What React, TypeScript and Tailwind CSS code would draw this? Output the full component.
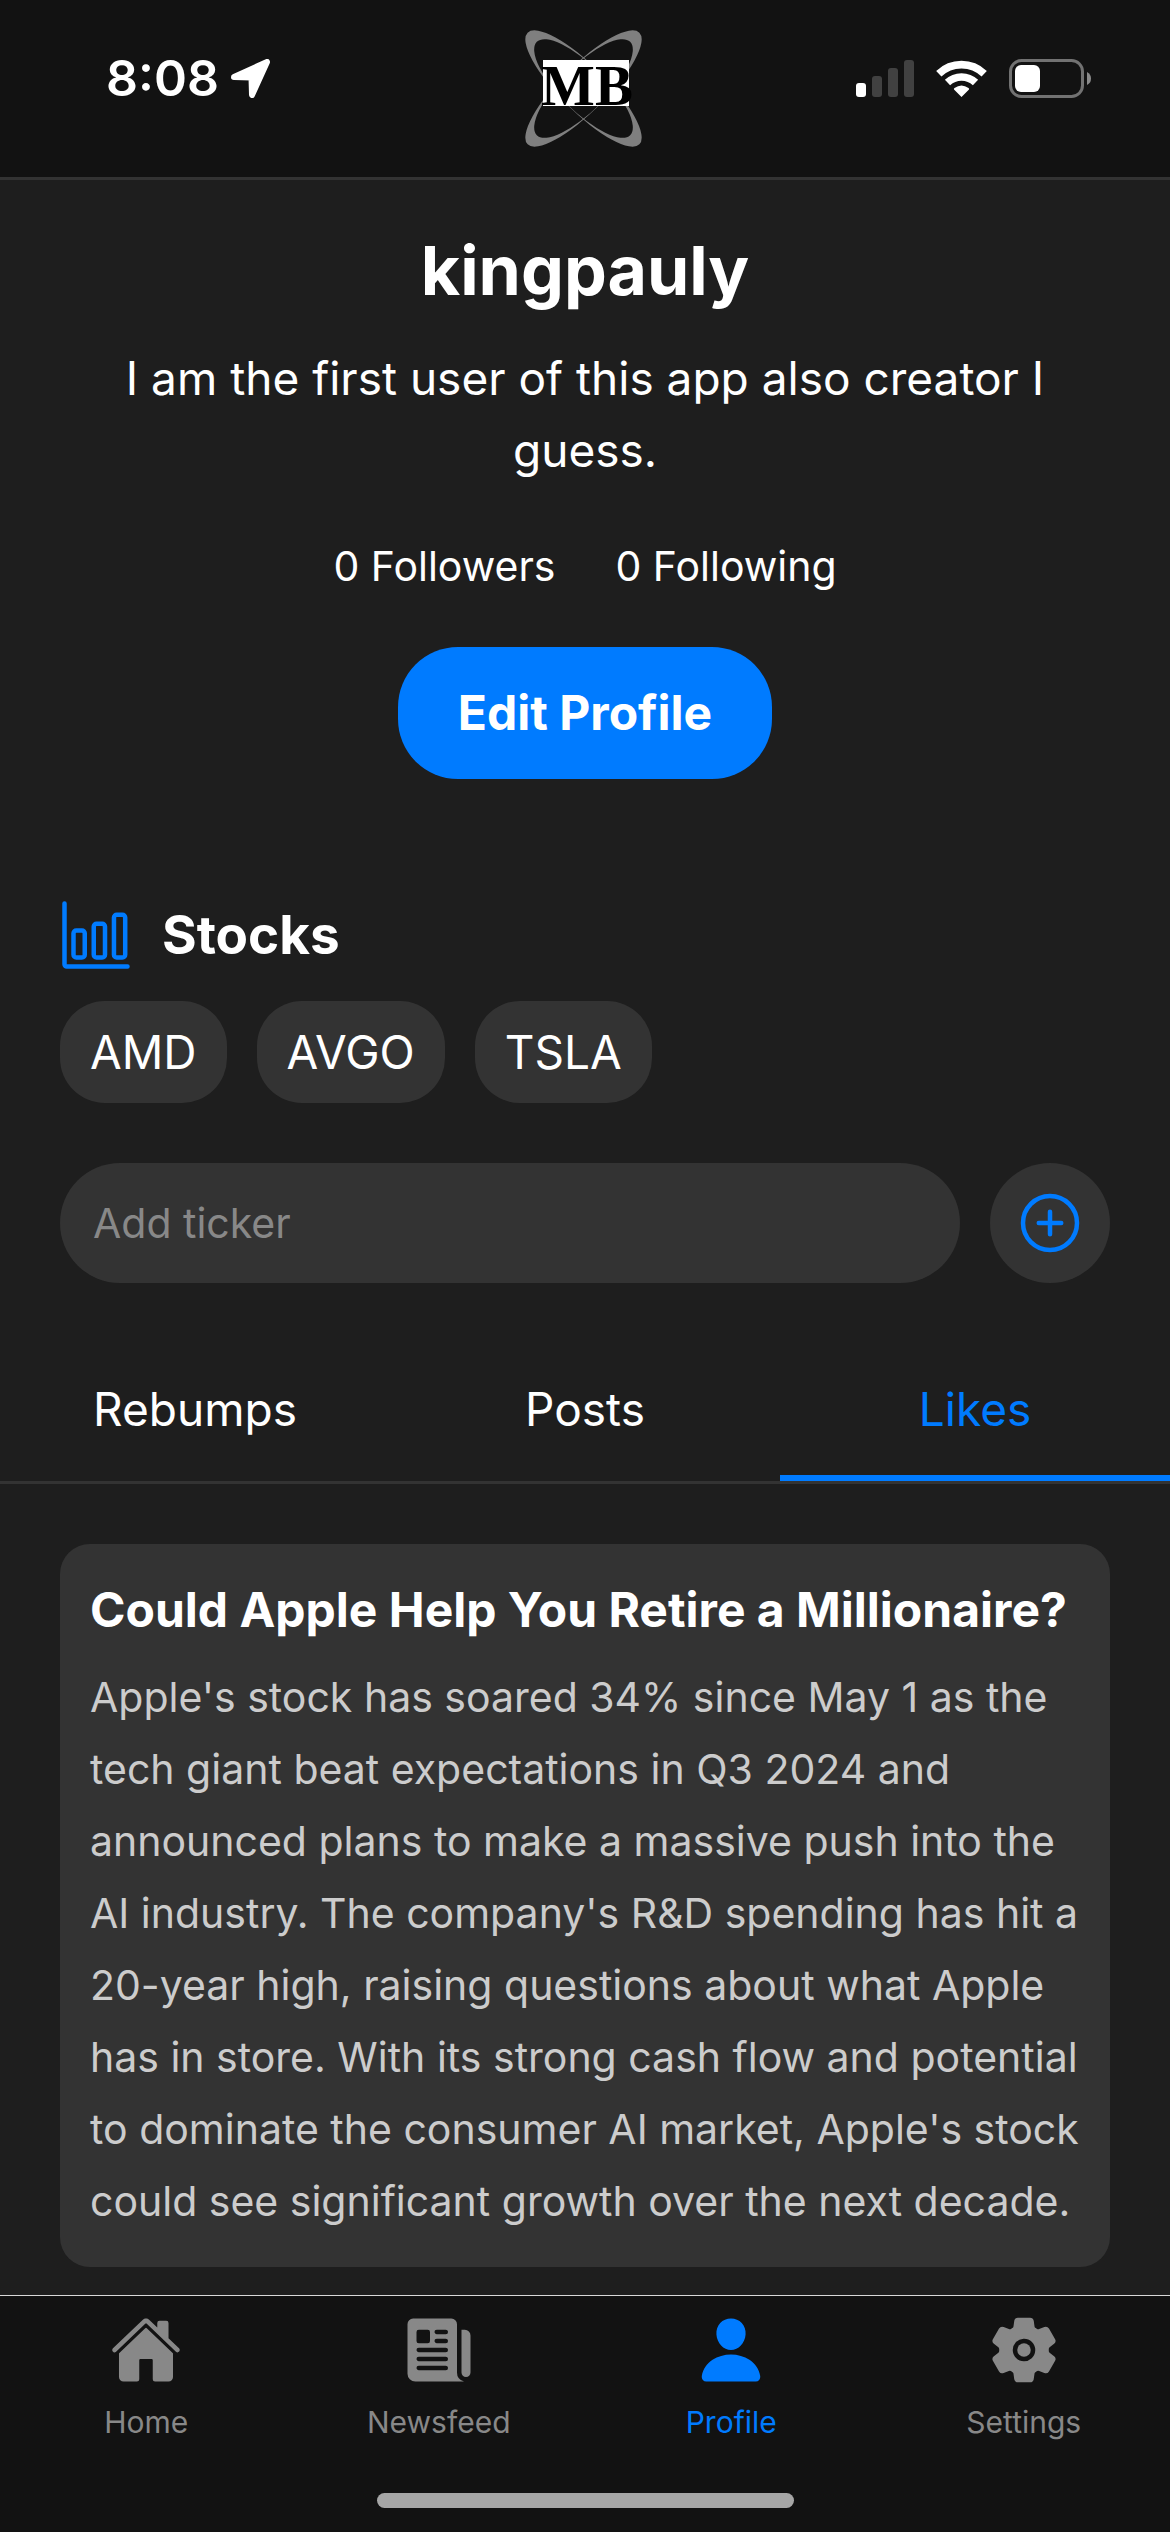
import { useState } from 'react';
import type { ComponentType } from 'react';
import {
  IoAddCircleOutline,
  IoBarChartOutline,
  IoHome,
  IoNewspaper,
  IoPerson,
  IoSettings,
} from 'react-icons/io5';

const tickers = ['AMD', 'AVGO', 'TSLA'];
const tabs = ['Rebumps', 'Posts', 'Likes'];

const navItems: { label: string; icon: ComponentType<{ className?: string }> }[] = [
  { label: 'Home', icon: IoHome },
  { label: 'Newsfeed', icon: IoNewspaper },
  { label: 'Profile', icon: IoPerson },
  { label: 'Settings', icon: IoSettings },
];

const RING =
  'M-79 0A79 23 0 1 1 79 0A79 23 0 1 1 -79 0ZM-66 0A66 22.6 0 1 0 66 0A66 22.6 0 1 0 -66 0Z';

function Logo() {
  return (
    <svg viewBox="24 20 117 117" className="size-[117px]" role="img" aria-label="MB">
      <g fill="#7f7f7f" fillRule="evenodd">
        <path d={RING} transform="translate(82.5 78.5) rotate(45)" />
        <path d={RING} transform="translate(82.5 78.5) rotate(-45)" />
      </g>
      <rect x="42" y="50" width="86" height="46" fill="#fff" />
      <text
        x="86"
        y="95"
        textAnchor="middle"
        fontFamily="'Liberation Serif', serif"
        fontWeight="700"
        fontSize="57"
        fill="#000"
      >
        MB
      </text>
    </svg>
  );
}

function LocationArrow() {
  return (
    <svg viewBox="0 0 39 39" className="size-[39px]" aria-hidden="true">
      <path
        d="M3 18L36 3L21 36L20.500 18.500Z"
        fill="#fff"
        stroke="#fff"
        strokeWidth="6"
        strokeLinejoin="round"
      />
    </svg>
  );
}

function Signal() {
  return (
    <svg viewBox="0 0 58 37" className="h-[37px] w-[58px]" aria-hidden="true">
      <rect x="0" y="23" width="10" height="14" rx="3" fill="#fff" />
      <rect x="16" y="16" width="10" height="21" rx="3" fill="#414141" />
      <rect x="32" y="8" width="10" height="29" rx="3" fill="#414141" />
      <rect x="48" y="0" width="10" height="37" rx="3" fill="#414141" />
    </svg>
  );
}

function Wifi() {
  return (
    <svg viewBox="0 0 51 37" className="h-[37px] w-[51px]" aria-hidden="true">
      <g fill="none" stroke="#fff" strokeWidth="7.600">
        <path d="M2.800 13.700A32.800 32.800 0 0 1 48.200 13.700" />
        <path d="M11.500 22.600A20.300 20.300 0 0 1 39.500 22.600" />
      </g>
      <path d="M25.500 37L18 29.500Q17.500 28.500 18.500 28Q25.500 23 32.500 28Q33.500 28.500 33 29.500Z" fill="#fff" />
    </svg>
  );
}

function Battery() {
  return (
    <svg viewBox="0 0 82 39" className="h-[39px] w-[82px]" aria-hidden="true">
      <rect x="1.500" y="1.500" width="72" height="36" rx="11" fill="none" stroke="#727272" strokeWidth="3" />
      <rect x="6" y="6" width="25" height="27" rx="6" fill="#fff" />
      <path d="M78 13Q82 15 82 19.500Q82 24 78 26Z" fill="#8a8a8a" />
    </svg>
  );
}

export default function App() {
  const [activeTab, setActiveTab] = useState('Likes');

  return (
    <div className="flex min-h-screen flex-col bg-[#1e1e1e] font-['Inter',sans-serif] text-white">
      <header className="grid h-[180px] grid-cols-[1fr_auto_1fr] items-center border-b-[3px] border-[#333] bg-[#121212] pr-1">
        <div className="flex items-center gap-3 pb-[21px] pl-[106px]">
          <time className="text-[50px] leading-none font-semibold">8:08</time>
          <LocationArrow />
        </div>
        <Logo />
        <div className="flex items-center justify-end gap-[22px] pr-[75px] pb-[21px]">
          <Signal />
          <Wifi />
          <Battery />
        </div>
      </header>

      <main className="flex-1 pb-[27px]">
        <section className="flex flex-col items-center px-[100px] pt-12 text-center">
          <h1 className="text-[68px] leading-[84px] font-bold">kingpauly</h1>
          <p className="mt-[30px] text-[46px] leading-[72px]">
            I am the first user of this app also creator I guess.
          </p>
          <div className="mt-[50px] flex gap-[60px] text-[41px] leading-[60px]">
            <span>0 Followers</span>
            <span>0 Following</span>
          </div>
          <button
            type="button"
            className="mt-[51px] h-[132px] rounded-[60px] bg-[#007bff] px-[60px] text-[48px] font-bold"
          >
            Edit Profile
          </button>
        </section>

        <section className="px-[60px] pt-[120px]">
          <h2 className="flex items-center gap-[30px] text-[53px] leading-[72px] font-bold">
            <IoBarChartOutline className="size-[72px] text-[#007bff]" />
            Stocks
          </h2>
          <ul className="mt-[30px] flex gap-[30px]">
            {tickers.map((ticker) => (
              <li
                key={ticker}
                className="flex h-[102px] items-center rounded-[45px] bg-[#333] px-[30px] text-[46px]"
              >
                {ticker}
              </li>
            ))}
          </ul>
          <form className="mt-[60px] flex gap-[30px]" onSubmit={(e) => e.preventDefault()}>
            <input
              type="text"
              aria-label="Add ticker"
              placeholder="Add ticker"
              className="h-[120px] min-w-0 flex-1 rounded-full bg-[#333] px-[33px] text-[41px] placeholder:text-[#888]"
            />
            <button
              type="submit"
              aria-label="Add"
              className="flex size-[120px] items-center justify-center rounded-full bg-[#333] text-[#007bff]"
            >
              <IoAddCircleOutline className="size-[72px]" />
            </button>
          </form>
        </section>

        <div role="tablist" className="mt-[60px] grid grid-cols-3 border-b-[3px] border-[#333]">
          {tabs.map((tab) => (
            <button
              key={tab}
              type="button"
              role="tab"
              aria-selected={tab === activeTab}
              onClick={() => setActiveTab(tab)}
              className={
                tab === activeTab
                  ? 'h-[138px] border-b-[6px] border-[#007bff] text-[46px] text-[#007bff]'
                  : 'h-[138px] border-b-[6px] border-transparent text-[46px]'
              }
            >
              {tab}
            </button>
          ))}
        </div>

        <article className="mx-[60px] mt-[60px] rounded-[30px] bg-[#333] p-[30px]">
          <h3 className="text-[48px] leading-[72px] font-bold">
            Could Apple Help You Retire a Millionaire?
          </h3>
          <p className="mt-[15px] text-[41px] leading-[72px] text-[#ccc]">
            Apple's stock has soared 34% since May 1 as the tech giant beat expectations in Q3 2024
            and announced plans to make a massive push into the AI industry. The company's R&amp;D
            spending has hit a 20-year high, raising questions about what Apple has in store. With
            its strong cash flow and potential to dominate the consumer AI market, Apple's stock
            could see significant growth over the next decade.
          </p>
        </article>
      </main>

      <footer className="border-t border-[#d8d8d8] bg-[#121212] pt-[18px] pb-6">
        <nav className="grid grid-cols-4">
          {navItems.map(({ label, icon: Icon }) => (
            <a
              key={label}
              href={`#${label.toLowerCase()}`}
              aria-current={label === 'Profile' ? 'page' : undefined}
              className={
                label === 'Profile'
                  ? 'flex flex-col items-center gap-[18px] text-[#007bff]'
                  : 'flex flex-col items-center gap-[18px] text-[#888]'
              }
            >
              <Icon className="size-[72px]" />
              <span className="text-[30px] leading-9">{label}</span>
            </a>
          ))}
        </nav>
        <div className="mx-auto mt-[53px] h-[15px] w-[417px] rounded-full bg-[#a6a6a6]" />
      </footer>
    </div>
  );
}
